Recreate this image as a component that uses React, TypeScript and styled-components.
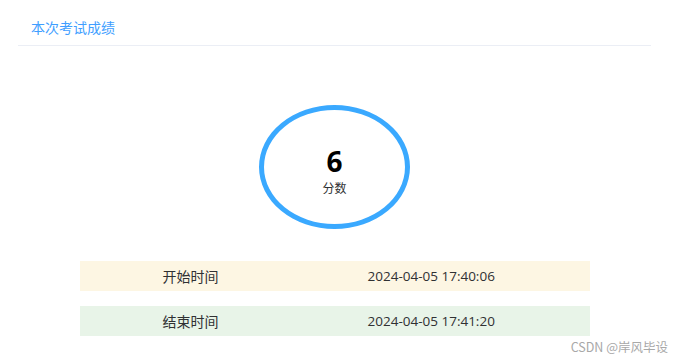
import React from "react";
import styled, { createGlobalStyle } from "styled-components";

const GlobalStyle = createGlobalStyle`
    html, body {
        margin: 0;
        padding: 0;
        background: #ffffff;
    }
    body {
        font-family: "Open Sans", "Noto Sans CJK SC", sans-serif;
        color: #303133;
    }
`;

const Page = styled.div`
    position: relative;
    width: 677px;
    height: 361px;
    padding: 0 26px 0 18px;
    box-sizing: border-box;
`;

const Header = styled.div`
    display: flex;
    align-items: center;
    height: 46px;
    padding: 9px 13px 0;
    box-sizing: border-box;
    border-bottom: 1px solid #ebeef5;
`;

const Title = styled.span`
    font-family: "Noto Sans CJK SC", sans-serif;
    font-size: 14px;
    color: #409eff;
`;

const Body = styled.div`
    display: flex;
    flex-direction: column;
    align-items: center;
`;

const ScoreRing = styled.div`
    display: flex;
    flex-direction: column;
    align-items: center;
    justify-content: center;
    width: 151px;
    height: 124px;
    margin-top: 59px;
    padding-top: 6px;
    box-sizing: border-box;
    border: 5px solid #3aa9ff;
    border-radius: 50%;
`;

const Score = styled.div`
    font-family: "Open Sans", sans-serif;
    font-size: 28px;
    font-weight: 700;
    line-height: 34px;
    color: #000000;
`;

const ScoreLabel = styled.div`
    margin-top: 2px;
    font-family: "Noto Sans CJK SC", sans-serif;
    font-size: 12px;
    line-height: 16px;
    color: #303133;
`;

const Rows = styled.div`
    display: flex;
    flex-direction: column;
    gap: 15px;
    width: 510px;
    margin-top: 32px;
`;

const Row = styled.div<{ $bg: string }>`
    display: grid;
    grid-template-columns: 205px 1fr;
    align-items: center;
    height: 30px;
    padding-left: 83px;
    background: ${(p) => p.$bg};
    font-size: 14px;
    color: #303133;
`;

const Label = styled.span`
    font-family: "Noto Sans CJK SC", sans-serif;
`;

const Value = styled.span`
    font-family: "Open Sans", sans-serif;
    font-size: 13.5px;
`;

const Watermark = styled.div`
    position: absolute;
    right: 9px;
    bottom: 5px;
    font-family: "Noto Sans CJK SC", sans-serif;
    font-size: 12.5px;
    color: #a8a8a8;
`;

const times = [
    { label: "开始时间", value: "2024-04-05 17:40:06", bg: "#fdf6e3" },
    { label: "结束时间", value: "2024-04-05 17:41:20", bg: "#e8f4e8" },
];

export default function App() {
    return (
        <Page>
            <GlobalStyle />
            <Header>
                <Title>本次考试成绩</Title>
            </Header>
            <Body>
                <ScoreRing>
                    <Score>6</Score>
                    <ScoreLabel>分数</ScoreLabel>
                </ScoreRing>
                <Rows>
                    {times.map((t) => (
                        <Row key={t.label} $bg={t.bg}>
                            <Label>{t.label}</Label>
                            <Value>{t.value}</Value>
                        </Row>
                    ))}
                </Rows>
            </Body>
            <Watermark>CSDN @岸风毕设</Watermark>
        </Page>
    );
}
